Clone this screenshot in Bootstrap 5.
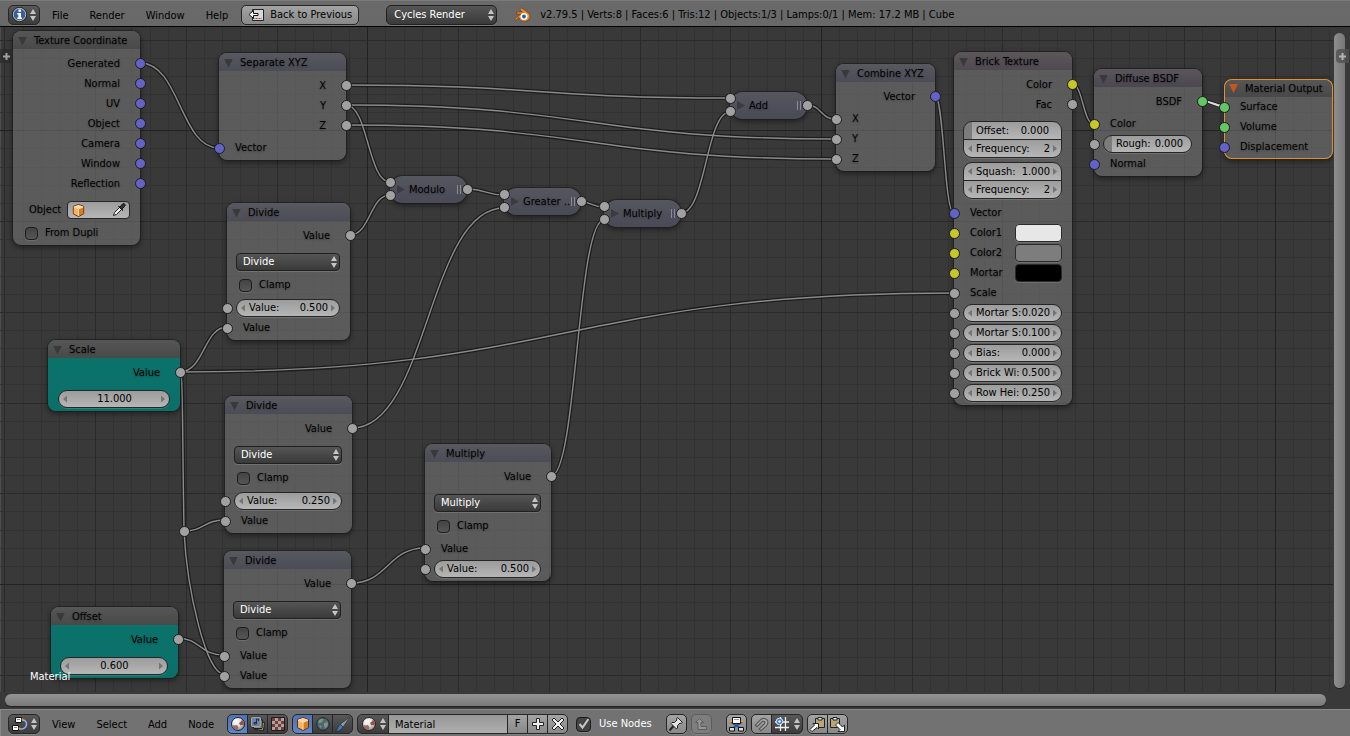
<!DOCTYPE html>
<html lang="en" data-bs-theme="dark">
<head>
<meta charset="utf-8">
<meta name="viewport" content="width=device-width, initial-scale=1">
<title>Node Editor</title>
<link href="https://cdn.jsdelivr.net/npm/bootstrap@5.3.0/dist/css/bootstrap.min.css" rel="stylesheet">
<style>
  body { font: 11px/16px "DejaVu Sans Condensed", "DejaVu Sans", sans-serif; color: #000; background: #393939; }
  input, select, button { font: inherit; color: inherit; }
  svg { display: block; flex: none; }

  /* header bars */
  .bar { height: 26px; padding: 0 8px; background: #727272; white-space: nowrap; }
  .bar-top { background: linear-gradient(#7b7b7b 0 1px, #6a6a6a 1px, #686868); box-shadow: 0 1px #000; margin-bottom: 1px; padding-top: 3px; }
  .bar-bottom { border-top: 1px solid #8a8a8a; height: 27px; border-left: 1px solid #888; padding-left: 7px; padding-top: 2px; }
  .menus { gap: 21px; margin: 0 13px 0 12px; padding-top: 2px; }
  .menus a { color: #000; text-decoration: none; }
  .menus .nav-link { padding: 0; }
  .ui { height: 20px; border: 1px solid #262626; border-radius: 5px; padding: 0; display: flex; align-items: center; justify-content: center; box-shadow: 0 1px rgba(255,255,255,.12); flex: none; }
  .ui-dark { background: linear-gradient(#585858, #3c3c3c); }
  .ui-light { background: linear-gradient(#a3a3a3, #898989); }
  .ui-on { background: linear-gradient(#4c73b5, #5d87cb); }
  .ui-dim { background: #7d7d7d; border-color: #5c5c5c; }
  .sq { width: 21px; }
  .back { width: 118px; gap: 6px; }
  .m14 { margin-left: 14px; }
  .joined > * { border-radius: 0; }
  .joined > * + * { margin-left: -1px; }
  .joined > :first-child { border-radius: 5px 0 0 5px; }
  .joined > :last-child { border-radius: 0 5px 5px 0; }
  .picker { width: 32px; gap: 3px; }
  .menu-select { appearance: none; color: #fff; border: 1px solid #202020; border-radius: 4px; outline: 0;
    background: url("data:image/svg+xml,%3Csvg xmlns='http://www.w3.org/2000/svg' width='6' height='14'%3E%3Cpath d='M3 1 6 6H0ZM3 13 0 8H6Z' fill='%23c4c4c4'/%3E%3C/svg%3E") no-repeat right 2px center, linear-gradient(#555, #3a3a3a); box-shadow: 0 1px rgba(255,255,255,.14); }
  .engine { width: 111px; height: 20px; padding: 0 7px; border-radius: 5px; margin-left: 27px; }
  .name-field { width: 120px; height: 20px; border: 1px solid #262626; padding: 0 6px; background: linear-gradient(#979797, #aeaeae); outline: 0; }
  .tick { appearance: none; flex: none; margin: 0; width: 13px; height: 13px; border: 1px solid #1d1d1d; border-radius: 4px; background: linear-gradient(#444, #555); box-shadow: 0 1px rgba(255,255,255,.12); }
  .tick-lg { width: 15px; height: 15px; }
  .tick-lg:checked { background: url("data:image/svg+xml,%3Csvg xmlns='http://www.w3.org/2000/svg' width='13' height='13'%3E%3Cpath d='M2.500 6 5.500 9.500 11.500 1' fill='none' stroke='%23c8c8c8' stroke-width='2'/%3E%3C/svg%3E") center no-repeat, #444; }

  /* canvas */
  .board { border-left: 1px solid #4d4d4d; }
  .canvas { overflow: hidden; margin-left: -1px; }
  .over { position: absolute; left: 0; top: 0; width: 100%; height: 100%; }
  .wire-edge { fill: none; stroke: rgba(20,20,20,.75); stroke-width: 4; }
  .wire-core { fill: none; stroke: #8a8a8a; stroke-width: 1.400; }
  .wire-sel { fill: none; stroke: #dcdcdc; stroke-width: 2; }
  .scroll-y { width: 17px; padding: 6px 5px 4px 1px; }
  .scroll-x { height: 17px; padding: 2px 24px 3px 5px; }
  .thumb-y { border-radius: 6px; background: linear-gradient(90deg, #8e8e8e, #777); box-shadow: 0 1px #222; }
  .thumb-x { border-radius: 6px; background: linear-gradient(#939393, #7a7a7a); box-shadow: 0 1px #222; }
  .tab-plus { position: absolute; top: 22px; width: 13px; height: 14px; border: 0; padding: 0; background: rgba(40,40,40,.65); display: flex; align-items: center; justify-content: center; }
  .tab-l { left: -1px; border-radius: 0 4px 4px 0; }
  .tab-r { right: 1px; border-radius: 4px 0 0 4px; background: rgba(80,80,80,.8); }
  .mat-name { position: absolute; left: 30px; bottom: 7px; color: #fff; }

  /* nodes */
  .node { position: absolute; border-radius: 8px; padding-bottom: 2px; background: rgba(125,125,125,.5); box-shadow: 0 0 0 1px rgba(25,25,25,.55), 0 2px 5px 1px rgba(0,0,0,.4); text-shadow: 0 1px 2px rgba(0,0,0,.3); }
  .node-head { height: 18px; padding: 2px 0 0 5px; gap: 7px; border-radius: 8px 8px 0 0; background: linear-gradient(#565656, #494949); margin-bottom: 4px; white-space: nowrap; }
  .conv .node-head { background: linear-gradient(#58585f, #4c4c57); }
  .tex .node-head { background: linear-gradient(#5a565a, #4e4a4f); }
  .shd .node-head { background: linear-gradient(#5a565b, #4b4750); }
  .node-head::before { content: ""; flex: none; width: 9px; height: 9px; background: #393939; clip-path: polygon(0 0, 100% 0, 50% 100%); }
  .active { box-shadow: inset 0 0 0 1px #e0912c, 0 2px 5px 1px rgba(0,0,0,.4); }
  .active .node-head { margin: 1px 1px 0; height: 17px; padding: 0 0 0 4px; }
  .active .node-head::before { background: #c4551c; }
  .teal { background: linear-gradient(#0b746c, #0b6f68); }
  .r { position: relative; height: 20px; display: flex; align-items: center; }
  .r-out { justify-content: flex-end; padding: 2px 20px 0 0; }
  .r-in { padding-left: 16px; }
  .r-swatch { padding-right: 10px; }
  .r-ctl { padding: 0 10px; }
  .r-num { padding: 0 10px 0 9px; }
  .r-tick { padding: 0 12px; gap: 7px; }
  .g3 { margin-top: 3px; }
  .g7 { margin-top: 7px; }
  .sock { position: absolute; top: 5px; width: 11px; height: 11px; border: 1px solid #1c1c1c; border-radius: 50%; background: #a1a1a1; }
  .sl { left: -5px; }
  .sr { right: -6px; }
  .vec { background: #6363c7; }
  .col3 { background: #c7c729; }
  .shader { background: #63c763; }
  .num { display: flex; align-items: center; width: 100%; height: 18px; padding: 0 4px; border: 1px solid #262626; border-radius: 9px; background: linear-gradient(#9c9c9c, #b6b6b6); box-shadow: 0 1px rgba(255,255,255,.14); text-shadow: none; white-space: nowrap; }
  .num::before, .num::after { content: ""; flex: none; width: 4px; height: 7px; background: #757575; clip-path: polygon(0 50%, 100% 0, 100% 100%); margin-right: 4px; }
  .num::after { clip-path: polygon(0 0, 100% 50%, 0 100%); margin: 0 0 0 3px; }
  .num input { flex: 1; min-width: 0; width: 0; border: 0; padding: 0; background: none; text-align: right; outline: 0; height: 16px; }
  .num .mid { text-align: center; }
  .fill { background: linear-gradient(90deg, #7c7c7c 8px, transparent 8px), linear-gradient(#9c9c9c, #b6b6b6); padding: 0 12px; }
  .fill::before, .fill::after { display: none; }
  .pair { padding: 0 10px 0 9px; margin-bottom: 4px; }
  .pair .num { height: 19px; }
  .pair .num:first-child { border-radius: 9px 9px 0 0; margin-bottom: -1px; box-shadow: none; }
  .pair .num:last-child { border-radius: 0 0 9px 9px; }
  .node .menu-select { width: 100%; height: 18px; padding: 0 6px; text-shadow: none; }
  .obj-field { height: 18px; border: 1px solid #262626; border-radius: 4px; background: linear-gradient(#9c9c9c, #b6b6b6); padding: 0 3px; margin-left: 6px; }
  .obj-field input { border: 0; background: none; min-width: 0; width: 0; flex: 1; padding: 0; outline: 0; }
  .swatch { width: 47px; height: 18px; border: 1px solid #2b2b2b; border-radius: 4px; margin-left: auto; padding: 0; box-shadow: 0 1px rgba(255,255,255,.12); }
  .sw-white { background: #e7e7e7; } .sw-grey { background: #7d7d7d; } .sw-black { background: #000; }
  .pill { height: 27px; width: 77px; border-radius: 13px; padding: 0 6px 0 7px; display: flex; align-items: center; background: linear-gradient(#565661, #4a4a56); white-space: nowrap; }
  .pill::before { content: ""; flex: none; width: 8px; height: 9px; background: #3b3b42; clip-path: polygon(0 0, 100% 50%, 0 100%); margin-right: 4px; }
  .pill::after { content: ""; flex: none; width: 4px; height: 9px; border: solid #8a8a94; border-width: 0 1px; margin-left: auto; }
  .s-hi { top: 1px; } .s-lo { top: 14px; } .s-mid { top: 8px; }

  #n-coord { left: 13px; top: 4px; width: 127px; }
  #n-sep { left: 219px; top: 26px; width: 127px; }
  #n-div1 { left: 227px; top: 176px; width: 123px; }
  #n-scale { left: 48px; top: 313px; width: 132px; }
  #n-div2 { left: 225px; top: 369px; width: 127px; }
  #n-div3 { left: 224px; top: 524px; width: 127px; }
  #n-offset { left: 51px; top: 580px; width: 127px; }
  #n-mul { left: 425px; top: 417px; width: 126px; }
  #n-mod { left: 390px; top: 149px; }
  #n-gt { left: 504px; top: 161px; }
  #n-mul2 { left: 604px; top: 173px; }
  #n-add { left: 730px; top: 65px; }
  #n-comb { left: 836px; top: 37px; width: 99px; }
  #n-brick { left: 954px; top: 25px; width: 118px; }
  #n-diff { left: 1094px; top: 42px; width: 108px; }
  #n-out { left: 1224px; top: 52px; width: 109px; }
  #n-route { left: 184px; top: 504px; width: 0; height: 0; padding: 0; box-shadow: none; }
  #n-route .sock { top: -5px; }
</style>
</head>
<body class="d-flex flex-column min-vh-100 overflow-hidden">

<svg width="0" height="0" class="position-absolute" aria-hidden="true">
  <defs>
    <radialGradient id="gball" cx=".35" cy=".3" r=".75"><stop offset="0" stop-color="#fff"/><stop offset=".6" stop-color="#ddd6d4"/><stop offset="1" stop-color="#8d8482"/></radialGradient>
    <symbol id="i-arrows" viewBox="0 0 6 14"><path d="M3 1 6 6H0ZM3 13 0 8H6Z" fill="#c4c4c4"/></symbol>
    <symbol id="i-cube" viewBox="0 0 16 16"><path d="M8 1.500 13.500 3.500V11.500L8 14.500 2.500 11.500V3.500Z" fill="#e8902f" stroke="#5a3410" stroke-width="1"/><path d="M2.800 3.700 8 2 13.200 3.700 8 6Z" fill="#fbd9a6"/><path d="M3 4.300 7.600 6.500V13.600L3 11.200Z" fill="#f6b264"/><path d="M8.400 6.500 13 4.300V11.200L8.400 13.600Z" fill="#d97c1e"/><path d="M3 4.300 8 6.400 13 4.300M8 6.400V13.800" fill="none" stroke="#fff0d8" stroke-width=".8"/></symbol>
    <symbol id="i-ball" viewBox="0 0 16 16"><circle cx="8" cy="8" r="6.500" fill="url(#gball)" stroke="#222"/><path d="M9 7Q11.500 5.500 12 3.800A6 6 0 0 1 13.900 8.500Q11.500 9.500 10.300 9.300Z" fill="#8f5148"/><path d="M2.200 9Q5 9.800 7 9L8.500 11.500 7.500 13.900A6 6 0 0 1 2.200 9Z" fill="#9c6a62"/></symbol>
  </defs>
</svg>

<header class="bar bar-top d-flex align-items-center">
  <button class="ui ui-dark picker" aria-label="Editor type: Info">
    <svg width="15" height="15" viewBox="0 0 15 15"><circle cx="7.500" cy="7.500" r="6.300" fill="#3a5f9c" stroke="#c9d4e6"/><circle cx="7.500" cy="7.500" r="7.100" fill="none" stroke="#111" stroke-width=".7"/><path d="M6.500 2.500H9V4.700H6.500ZM5.300 6H9V10.500H10V12H5.300V10.500H6.400V7.400H5.300Z" fill="#fff"/></svg>
    <svg width="6" height="14"><use href="#i-arrows"/></svg>
  </button>
  <nav class="menus nav flex-nowrap">
    <a class="nav-link" href="#">File</a><a class="nav-link" href="#">Render</a><a class="nav-link" href="#">Window</a><a class="nav-link" href="#">Help</a>
  </nav>
  <button class="ui ui-light back">
    <svg width="16" height="14" viewBox="0 0 16 14"><path d="M4.500 1.500H15.500V12.500H4.500Z" fill="#d8d8d8" stroke="#222"/><path d="M6 10.500H14" stroke="#999"/><path d="M8 10.500H13" stroke="#c33" stroke-dasharray="1 2"/><path d="M1 6.500 5.500 2.500V5.500H10V7.500H5.500V10.500Z" fill="#fff" stroke="#111"/></svg>
    Back to Previous
  </button>
  <select class="menu-select engine" aria-label="Render engine"><option>Cycles Render</option></select>
  <svg class="ms-3" width="19" height="16" viewBox="0 0 18 16"><path d="M1 12 7.500 7H3V5H9L6.300 2.600 8.200 1 15 6A5.700 5 0 1 1 5.300 10.500L2.500 13.200Z" fill="#f08a24" stroke="#5f2d06" stroke-width=".5"/><circle cx="10.500" cy="9.500" r="3.500" fill="#fff"/><circle cx="10.500" cy="9.500" r="2" fill="#265fb0"/></svg>
  <span class="ms-2" id="stats">v2.79.5 | Verts:8 | Faces:6 | Tris:12 | Objects:1/3 | Lamps:0/1 | Mem: 17.2 MB | Cube</span>
</header>

<main class="board d-flex flex-grow-1 position-relative">
  <div class="flex-grow-1 d-flex flex-column">
  <div class="canvas flex-grow-1 position-relative">
    <svg class="over" id="grid" aria-hidden="true"></svg>
    <svg class="over" aria-hidden="true">
      <defs>
        <g id="wires">
          <path d="M140 36C180 36 180 121 219 121"/>
          <path d="M346 58C538 58 538 71 730 71"/>
          <path d="M346 78C590 78 590 112 835 112"/>
          <path d="M346 78C368 78 368 155 390 155"/>
          <path d="M346 98C590 98 590 132 835 132"/>
          <path d="M350 208C370 208 370 168 390 168"/>
          <path d="M467 162C486 162 486 168 504 168"/>
          <path d="M352 401C428 401 428 181 504 181"/>
          <path d="M581 175C592 175 592 180 604 180"/>
          <path d="M551 449C577 449 577 193 604 193"/>
          <path d="M681 186C706 186 706 85 730 85"/>
          <path d="M807 78C821 78 821 92 835 92"/>
          <path d="M935 69C944 69 944 186 954 186"/>
          <path d="M1072 57C1083 57 1083 97 1094 97"/>
          <path d="M180 345C204 345 204 300 227 300"/>
          <path d="M180 345C567 345 567 266 954 266"/>
          <path d="M180 345C183 345 182 380 184 504"/>
          <path d="M184 504C204 504 204 493 225 493"/>
          <path d="M184 504C187 563 206 647 224 647"/>
          <path d="M177 611C200 611 200 628 224 628"/>
          <path d="M351 556C388 556 388 521 425 521"/>
        </g>
      </defs>
      <use href="#wires" class="wire-edge"/><use href="#wires" class="wire-core"/>
      <path class="wire-edge" d="M1202 74C1213 74 1213 79 1224 79"/><path class="wire-sel" d="M1202 74C1213 74 1213 79 1224 79"/>
    </svg>

    <section class="node" id="n-coord">
      <div class="node-head d-flex align-items-center">Texture Coordinate</div>
      <div class="r r-out">Generated<span class="sock sr vec"></span></div>
      <div class="r r-out">Normal<span class="sock sr vec"></span></div>
      <div class="r r-out">UV<span class="sock sr vec"></span></div>
      <div class="r r-out">Object<span class="sock sr vec"></span></div>
      <div class="r r-out">Camera<span class="sock sr vec"></span></div>
      <div class="r r-out">Window<span class="sock sr vec"></span></div>
      <div class="r r-out">Reflection<span class="sock sr vec"></span></div>
      <div class="r r-in r-swatch g7"><label for="obj">Object</label>
        <div class="obj-field d-flex align-items-center flex-grow-1"><svg width="15" height="15"><use href="#i-cube"/></svg><input id="obj" type="text">
          <svg width="14" height="14" viewBox="0 0 14 14"><path d="M1.500 12.500 2.500 9.500 7.500 4.500 9.500 6.500 4.500 11.500Z" fill="#eee" stroke="#222"/><path d="M6.500 3.500 8 4 10.500 1Q12.500 0 13 1.500 13.500 2.500 12.500 3.500L10 6 10.500 7.500Z" fill="#333" stroke="#111"/></svg></div></div>
      <div class="r r-tick g3"><input class="tick" type="checkbox" id="dupli"><label for="dupli">From Dupli</label></div>
    </section>

    <section class="node conv" id="n-sep">
      <div class="node-head d-flex align-items-center">Separate XYZ</div>
      <div class="r r-out">X<span class="sock sr"></span></div>
      <div class="r r-out">Y<span class="sock sr"></span></div>
      <div class="r r-out">Z<span class="sock sr"></span></div>
      <div class="r r-in g3">Vector<span class="sock sl vec"></span></div>
    </section>

    <section class="node conv" id="n-div1">
      <div class="node-head d-flex align-items-center">Divide</div>
      <div class="r r-out">Value<span class="sock sr"></span></div>
      <div class="r r-num g7"><select class="menu-select" aria-label="Operation"><option>Divide</option></select></div>
      <div class="r r-tick g3"><input class="tick" type="checkbox" id="c1"><label for="c1">Clamp</label></div>
      <div class="r r-num g3"><span class="sock sl"></span><div class="num"><label for="v1">Value:</label><input id="v1" value="0.500"></div></div>
      <div class="r r-in">Value<span class="sock sl"></span></div>
    </section>

    <section class="node teal" id="n-scale">
      <div class="node-head d-flex align-items-center">Scale</div>
      <div class="r r-out">Value<span class="sock sr"></span></div>
      <div class="r r-ctl g7"><div class="num"><input class="mid" aria-label="Scale" value="11.000"></div></div>
    </section>

    <section class="node conv" id="n-div2">
      <div class="node-head d-flex align-items-center">Divide</div>
      <div class="r r-out">Value<span class="sock sr"></span></div>
      <div class="r r-num g7"><select class="menu-select" aria-label="Operation"><option>Divide</option></select></div>
      <div class="r r-tick g3"><input class="tick" type="checkbox" id="c2"><label for="c2">Clamp</label></div>
      <div class="r r-num g3"><span class="sock sl"></span><div class="num"><label for="v2">Value:</label><input id="v2" value="0.250"></div></div>
      <div class="r r-in">Value<span class="sock sl"></span></div>
    </section>

    <section class="node conv" id="n-div3">
      <div class="node-head d-flex align-items-center">Divide</div>
      <div class="r r-out">Value<span class="sock sr"></span></div>
      <div class="r r-num g7"><select class="menu-select" aria-label="Operation"><option>Divide</option></select></div>
      <div class="r r-tick g3"><input class="tick" type="checkbox" id="c3"><label for="c3">Clamp</label></div>
      <div class="r r-in g3">Value<span class="sock sl"></span></div>
      <div class="r r-in">Value<span class="sock sl"></span></div>
    </section>

    <section class="node teal" id="n-offset">
      <div class="node-head d-flex align-items-center">Offset</div>
      <div class="r r-out">Value<span class="sock sr"></span></div>
      <div class="r r-num g7"><div class="num"><input class="mid" aria-label="Offset" value="0.600"></div></div>
    </section>

    <section class="node conv" id="n-mul">
      <div class="node-head d-flex align-items-center">Multiply</div>
      <div class="r r-out">Value<span class="sock sr"></span></div>
      <div class="r r-num g7"><select class="menu-select" aria-label="Operation"><option>Multiply</option></select></div>
      <div class="r r-tick g3"><input class="tick" type="checkbox" id="c4"><label for="c4">Clamp</label></div>
      <div class="r r-in g3">Value<span class="sock sl"></span></div>
      <div class="r r-num"><span class="sock sl"></span><div class="num"><label for="v4">Value:</label><input id="v4" value="0.500"></div></div>
    </section>

    <section class="node pill" id="n-mod">Modulo<span class="sock sl s-hi"></span><span class="sock sl s-lo"></span><span class="sock sr s-mid"></span></section>
    <section class="node pill" id="n-gt">Greater ..<span class="sock sl s-hi"></span><span class="sock sl s-lo"></span><span class="sock sr s-mid"></span></section>
    <section class="node pill" id="n-mul2">Multiply<span class="sock sl s-hi"></span><span class="sock sl s-lo"></span><span class="sock sr s-mid"></span></section>
    <section class="node pill" id="n-add">Add<span class="sock sl s-hi"></span><span class="sock sl s-lo"></span><span class="sock sr s-mid"></span></section>
    <div class="node" id="n-route"><span class="sock sl"></span></div>

    <section class="node conv" id="n-comb">
      <div class="node-head d-flex align-items-center">Combine XYZ</div>
      <div class="r r-out">Vector<span class="sock sr vec"></span></div>
      <div class="r r-in g3">X<span class="sock sl"></span></div>
      <div class="r r-in">Y<span class="sock sl"></span></div>
      <div class="r r-in">Z<span class="sock sl"></span></div>
    </section>

    <section class="node tex" id="n-brick">
      <div class="node-head d-flex align-items-center">Brick Texture</div>
      <div class="r r-out">Color<span class="sock sr col3"></span></div>
      <div class="r r-out">Fac<span class="sock sr"></span></div>
      <div class="pair g7"><div class="num fill"><label for="b1">Offset:</label><input id="b1" value="0.000"></div><div class="num"><label for="b2">Frequency:</label><input id="b2" value="2"></div></div>
      <div class="pair"><div class="num"><label for="b3">Squash:</label><input id="b3" value="1.000"></div><div class="num"><label for="b4">Frequency:</label><input id="b4" value="2"></div></div>
      <div class="r r-in">Vector<span class="sock sl vec"></span></div>
      <div class="r r-in r-swatch">Color1<span class="sock sl col3"></span><button class="swatch sw-white" aria-label="Color1"></button></div>
      <div class="r r-in r-swatch">Color2<span class="sock sl col3"></span><button class="swatch sw-grey" aria-label="Color2"></button></div>
      <div class="r r-in r-swatch">Mortar<span class="sock sl col3"></span><button class="swatch sw-black" aria-label="Mortar"></button></div>
      <div class="r r-in">Scale<span class="sock sl"></span></div>
      <div class="r r-num"><span class="sock sl"></span><div class="num"><label for="b5">Mortar S:</label><input id="b5" value="0.020"></div></div>
      <div class="r r-num"><span class="sock sl"></span><div class="num"><label for="b6">Mortar S:</label><input id="b6" value="0.100"></div></div>
      <div class="r r-num"><span class="sock sl"></span><div class="num"><label for="b7">Bias:</label><input id="b7" value="0.000"></div></div>
      <div class="r r-num"><span class="sock sl"></span><div class="num"><label for="b8">Brick Wi:</label><input id="b8" value="0.500"></div></div>
      <div class="r r-num"><span class="sock sl"></span><div class="num"><label for="b9">Row Hei:</label><input id="b9" value="0.250"></div></div>
    </section>

    <section class="node shd" id="n-diff">
      <div class="node-head d-flex align-items-center">Diffuse BSDF</div>
      <div class="r r-out">BSDF<span class="sock sr shader"></span></div>
      <div class="r r-in g3">Color<span class="sock sl col3"></span></div>
      <div class="r r-num"><span class="sock sl"></span><div class="num fill pe-2"><label for="d1">Rough:</label><input id="d1" value="0.000"></div></div>
      <div class="r r-in">Normal<span class="sock sl vec"></span></div>
    </section>

    <section class="node active" id="n-out">
      <div class="node-head d-flex align-items-center">Material Output</div>
      <div class="r r-in">Surface<span class="sock sl shader"></span></div>
      <div class="r r-in">Volume<span class="sock sl shader"></span></div>
      <div class="r r-in">Displacement<span class="sock sl vec"></span></div>
    </section>

    <span class="mat-name">Material</span>
  </div>
  </div>
  <div class="scroll-y d-flex"><div class="thumb-y flex-grow-1"></div></div>
  <button class="tab-plus tab-l" aria-label="Show tool shelf"><svg width="7" height="7"><path d="M3.500 0V7M0 3.500H7" stroke="#a0a0a0" stroke-width="2"/></svg></button>
  <button class="tab-plus tab-r" aria-label="Show properties"><svg width="7" height="7"><path d="M3.500 0V7M0 3.500H7" stroke="#b4b4b4" stroke-width="2"/></svg></button>
</main>
<div class="scroll-x d-flex"><div class="thumb-x flex-grow-1"></div></div>

<footer class="bar bar-bottom d-flex align-items-center">
  <button class="ui ui-dark picker" aria-label="Editor type: Node Editor">
    <svg width="16" height="16" viewBox="0 0 16 16"><path d="M10 4Q14.500 4 14.500 8T10 13H7" fill="none" stroke="#8fb0f0" stroke-width="1.500"/><path d="M3.500 1.500H9.500V6.500H3.500ZM.5 9.500H6.500V14.500H.5Z" fill="#fff" stroke="#111"/><path d="M5 3.500H8M2 11.500H5" stroke="#888"/><circle cx="10.500" cy="3.500" r="1" fill="#f39a1e"/><circle cx="7.500" cy="12.500" r="1" fill="#f39a1e"/></svg>
    <svg width="6" height="14"><use href="#i-arrows"/></svg>
  </button>
  <nav class="menus nav flex-nowrap">
    <a class="nav-link" href="#">View</a><a class="nav-link" href="#">Select</a><a class="nav-link" href="#">Add</a><a class="nav-link" href="#">Node</a>
  </nav>
  <div class="joined d-flex">
    <button class="ui ui-on sq" aria-label="Shader nodes"><svg width="16" height="16"><use href="#i-ball"/></svg></button>
    <button class="ui ui-dark sq" aria-label="Compositing nodes"><svg width="16" height="16" viewBox="0 0 16 16"><path d="M5 5.500 14.500 6.500 13.500 14.500 5 13.500Z" fill="#a5a595" stroke="#1c1c1c"/><path d="M3.500 3.500 12.500 4 12 12.500H3.500Z" fill="#b0b0a4" stroke="#1c1c1c"/><path d="M1.500 1.500H10.500V10.500H1.500Z" fill="#6f83a6" stroke="#cfcfc4"/><path d="M1 1H11V11H1Z" fill="none" stroke="#222" stroke-width=".5"/><path d="M6.500 3V8H4V6.500H6.500M6.500 3H8.500V5" fill="none" stroke="#1d2c4c"/></svg></button>
    <button class="ui ui-dark sq" aria-label="Texture nodes"><svg width="14" height="14" viewBox="0 0 14 14"><path d="M.5 .5H13.500V13.500H.5Z" fill="#a7a39f" stroke="#1c1c1c"/><path d="M1 1H4V4H1ZM7 1H10V4H7ZM4 4H7V7H4ZM10 4H13V7H10ZM1 7H4V10H1ZM7 7H10V10H7ZM4 10H7V13H4ZM10 10H13V13H10Z" fill="#7c3b36"/></svg></button>
  </div>
  <div class="joined d-flex ms-1">
    <button class="ui ui-on sq" aria-label="Object"><svg width="16" height="16"><use href="#i-cube"/></svg></button>
    <button class="ui ui-dark sq" aria-label="World"><svg width="14" height="14" viewBox="0 0 14 14"><circle cx="7" cy="7" r="6.300" fill="#4f6478" stroke="#1d262d"/><path d="M3 3Q5 1 7.500 2L6 5 3.500 6 2 5.500ZM8 6 11.500 5 12 8 9.500 11.500 8 9ZM3 8 5.500 9 5 11.500Z" fill="#7c9a72"/></svg></button>
    <button class="ui ui-dark sq" aria-label="Line style"><svg width="17" height="17" viewBox="0 0 15 15"><path d="M14 1 5.500 7.200 8 9.800Z" fill="#8f9cac" stroke="#2a3340" stroke-width=".6"/><path d="M5.500 7.200 8 9.800Q6.500 13 1 14 3 12 3.500 10 4.500 8 5.500 7.200Z" fill="#4b75ad" stroke="#1c2938" stroke-width=".6"/></svg></button>
  </div>
  <div class="joined d-flex ms-1">
    <button class="ui ui-dark picker" aria-label="Browse material"><svg width="16" height="16"><use href="#i-ball"/></svg><svg width="6" height="14"><use href="#i-arrows"/></svg></button>
    <input class="name-field" aria-label="Material name" value="Material">
    <button class="ui ui-light sq">F</button>
    <button class="ui ui-light sq" aria-label="Add material"><svg width="14" height="14" viewBox="0 0 14 14"><path d="M5.500 1.500H8.500V5.500H12.500V8.500H8.500V12.500H5.500V8.500H1.500V5.500H5.500Z" fill="#eee" stroke="#222"/></svg></button>
    <button class="ui ui-light sq" aria-label="Unlink"><svg width="14" height="14" viewBox="0 0 14 14"><path d="M3 1 7 5 11 1 13 3 9 7 13 11 11 13 7 9 3 13 1 11 5 7 1 3Z" fill="#eee" stroke="#222"/></svg></button>
  </div>
  <div class="d-flex align-items-center ms-2 gap-2 text-white"><input class="tick tick-lg" type="checkbox" id="use" checked><label for="use">Use Nodes</label></div>
  <button class="ui ui-light sq m14" aria-label="Pin"><svg width="16" height="16" viewBox="0 0 16 16"><path d="M1.500 14.500 6 9.500" stroke="#222" stroke-width="2"/><path d="M9.500 1.500 14.500 6.500 13 7.500 12 7 9.500 9.500 9.500 12 8.500 13 3 7.500 4 6.500 6.500 6.500 9 4 8.500 3Z" fill="#e4e4e4" stroke="#222"/></svg></button>
  <button class="ui ui-dim sq ms-1" aria-label="Go to parent"><svg width="14" height="14" viewBox="0 0 14 14"><path d="M5.500 1.500 9.500 5.500H7V9.500H12.500V12.500H4V5.500H1.500Z" fill="#959595" stroke="#5e5e5e"/></svg></button>
  <button class="ui ui-light sq m14" aria-label="Backdrop"><svg width="17" height="16" viewBox="0 0 17 16"><path d="M3 6 13.500 13M14 6 3.500 13" fill="none" stroke="#2c57a5" stroke-width="2"/><path d="M4.500 1.500H12.500V7.500H4.500Z" fill="#fff" stroke="#111"/><path d="M6 3.500H11" stroke="#999"/><path d="M1.500 11.500H6.500V15H1.500ZM10.500 11.500H15.500V15H10.500Z" fill="#ddd" stroke="#111"/><circle cx="3" cy="5" r="1.200" fill="#f39a1e"/><circle cx="14" cy="5" r="1.200" fill="#f39a1e"/></svg></button>
  <div class="joined d-flex ms-1">
    <button class="ui ui-light sq" aria-label="Snap"><svg width="17" height="17" viewBox="0 0 15 15"><path d="M2 8 7 3Q10 1 12.500 3.500 14 6 12 8.500L7 13 5.500 11.500 10 7Q11 5.500 10 4.800 9 4.200 8 5L3.500 9.500Z" fill="#aaa" stroke="#555"/></svg></button>
    <button class="ui ui-dark picker" aria-label="Snap element"><svg width="17" height="16" viewBox="0 0 17 16"><path d="M6.500 1V15M11.500 1V15M1 6H15M1 11.500H15" stroke="#eee" stroke-width="1.300"/><circle cx="5.500" cy="5.500" r="3.300" fill="#3f78d4" stroke="#dfe9fb"/><circle cx="5.500" cy="5.500" r="1.200" fill="#fff"/></svg><svg width="6" height="14"><use href="#i-arrows"/></svg></button>
  </div>
  <div class="joined d-flex ms-1">
    <button class="ui ui-light sq" aria-label="Copy"><svg width="17" height="16" viewBox="0 0 17 16"><path d="M6.500 2.500H15.500V11.500H6.500Z" fill="#b9a677" stroke="#222"/><path d="M9 1.500H13V4H9Z" fill="#eee" stroke="#222"/><path d="M1 13.500 5.500 9 4 7.500H9.500V13L8 11.500 3 15.500Z" fill="#fff" stroke="#222"/></svg></button>
    <button class="ui ui-light sq" aria-label="Paste"><svg width="17" height="16" viewBox="0 0 17 16"><path d="M1.500 2.500H10.500V11.500H1.500Z" fill="#b9a677" stroke="#222"/><path d="M4 1.500H8V4H4Z" fill="#eee" stroke="#222"/><path d="M9 6.500 13.500 11 15.500 9V15.500H9L11 13.500 6.500 9Z" fill="#fff" stroke="#222"/></svg></button>
  </div>
</footer>

<script src="https://cdn.jsdelivr.net/npm/bootstrap@5.3.0/dist/js/bootstrap.bundle.min.js"></script>
<script>
  // Three-level grid: 25 minor cells make one block of 1361/3 px, anchored where the heaviest lines cross.
  const grid = document.getElementById('grid'), block = 1361 / 3, cell = block / 25;
  const levels = ['#323232', '#2a2a2a', '#222222'];
  function drawGrid() {
    const w = grid.clientWidth, h = grid.clientHeight, lines = [[], [], []];
    const add = (origin, size, make) => {
      for (let i = Math.ceil(-origin / cell); origin + i * cell < size; i++) {
        const p = Math.floor(origin + i * cell);
        lines[i % 25 === 0 ? 2 : i % 5 === 0 ? 1 : 0].push(make(p));
      }
    };
    add(821.5, w, p => `M${p} 0h1v${h}h-1z`);
    add(557.5, h, p => `M0 ${p}h${w}v1h-${w}z`);
    grid.innerHTML = lines.map((l, i) => `<path fill="${levels[i]}" d="${l.join('')}"/>`).join('');
  }
  drawGrid();
  addEventListener('resize', drawGrid);
</script>
</body>
</html>
